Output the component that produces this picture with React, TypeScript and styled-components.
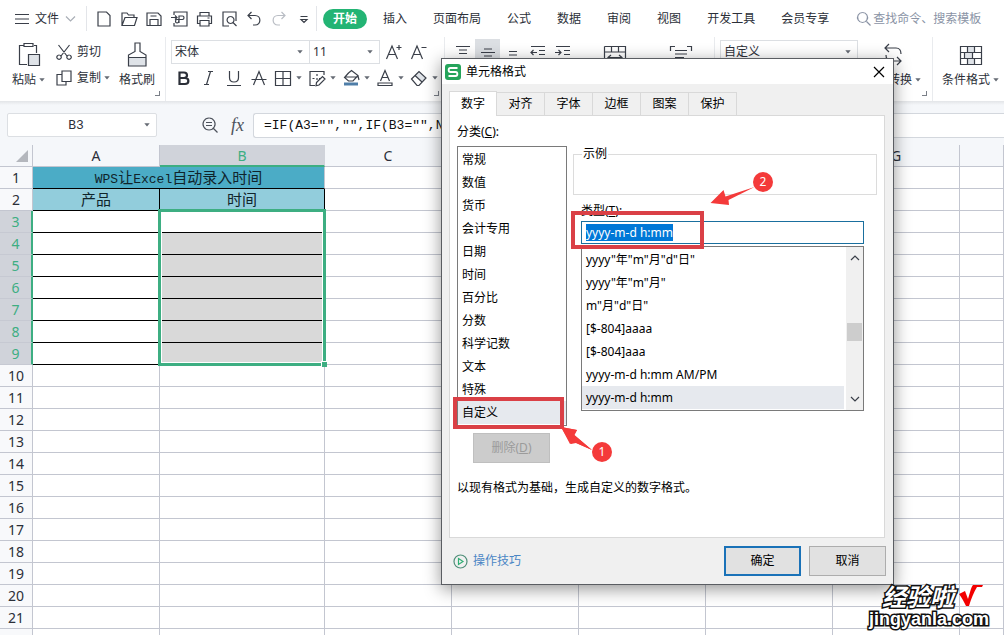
import React, { useEffect, useRef } from "react";
import styled, { createGlobalStyle, css } from "styled-components";

const GlobalStyle = createGlobalStyle`
  *, *::before, *::after { box-sizing: border-box; }
  body { margin: 0; }
  button, input, select { font: inherit; color: inherit; margin: 0; padding: 0; }
  body, button, input, select {
    font-family: "Noto Sans", "Noto Sans CJK SC", sans-serif;
  }
`;

const green = "#3dae82";
const line = "#c3c6d0";
const mono = `"Liberation Mono", "Noto Sans CJK SC", monospace`;

const Page = styled.div`
  position: relative;
  height: 100vh;
  overflow: hidden;
  display: flex;
  flex-direction: column;
  background: #fff;
  color: #2b2f38;
  font-size: 12px;
  line-height: 18px;
  white-space: nowrap;
`;

/* ---------- menu bar ---------- */

const MenuBar = styled.header`
  flex: none;
  display: flex;
  align-items: center;
  height: 37px;
  padding-left: 15px;
`;

const PlainButton = styled.button`
  flex: none;
  display: flex;
  align-items: center;
  justify-content: center;
  border: 0;
  background: transparent;
`;

const FileButton = styled(PlainButton)`
  gap: 6px;
  margin-right: 10px;
`;

const IconButton = styled(PlainButton)<{ $active?: boolean; $wide?: boolean }>`
  width: ${(p) => (p.$wide ? "66px" : "25px")};
  height: 25px;
  background: ${(p) => (p.$active ? "#dcdfe3" : "transparent")};
`;

const Divider = styled.span<{ $space?: number }>`
  flex: none;
  width: 1px;
  align-self: stretch;
  margin: 6px ${(p) => p.$space ?? 4}px 6px 0;
  background: #e3e5e9;
`;

const MenuTabs = styled.nav`
  flex: none;
  display: flex;
  gap: 6px;
`;

const MenuTab = styled.button<{ $active?: boolean }>`
  height: 20px;
  padding: 0 10px;
  border: 0;
  border-radius: 10px;
  background: transparent;
  ${(p) =>
    p.$active &&
    css`
      background: #23b474;
      color: #fff;
      font-weight: 700;
    `}
`;

const Search = styled.label`
  flex: 1;
  min-width: 0;
  display: flex;
  align-items: center;
  gap: 1px;
  margin-left: 17px;
  color: #8a93a5;
`;

const SearchInput = styled.input`
  flex: 1;
  min-width: 0;
  border: 0;
  outline: 0;
  background: transparent;
  &::placeholder { color: #8a93a5; opacity: 1; }
`;

/* ---------- ribbon ---------- */

const Ribbon = styled.div`
  flex: none;
  display: flex;
  height: 64px;
`;

const Group = styled.div<{ $left?: number; $right?: number }>`
  position: relative;
  flex: none;
  display: flex;
  padding: 2px ${(p) => p.$right ?? 5}px 0 ${(p) => p.$left ?? 5}px;
  border-right: 1px solid #e9ebee;
`;

const Corner = styled.span`
  position: absolute;
  right: 5px;
  bottom: 5px;
  width: 5px;
  height: 5px;
  border: solid #7a7f88;
  border-width: 0 1px 1px 0;
`;

const Stack = styled.div`
  display: flex;
  flex-direction: column;
  gap: 1px;
`;

const Line = styled.div`
  display: flex;
  align-items: center;
  height: 25px;
`;

const AlignLine = styled(Line)`
  margin-right: 7px;
`;

const BigButton = styled(PlainButton)`
  flex-direction: column;
  justify-content: flex-start;
  gap: 2px;
  height: 54px;
  padding-top: 2px;
`;

const SmallButton = styled(PlainButton)`
  gap: 5px;
  height: 25px;
  justify-content: flex-start;
`;

const Caption = styled.span`
  display: flex;
  align-items: center;
  gap: 3px;
`;

const DropButton = styled(PlainButton)`
  width: 34px;
  height: 25px;
  gap: 4px;
`;

const SelectFrame = styled.span<{ $w: number; $round?: boolean }>`
  flex: none;
  display: grid;
  grid-template-columns: 1fr 12px;
  align-items: center;
  width: ${(p) => p.$w}px;
  height: 24px;
  margin-right: -1px;
  border: 1px solid #dcdfe3;
  background: #fff;
  border-radius: ${(p) => (p.$round ? "2px" : "0")};
  svg { grid-area: 1 / 2; pointer-events: none; }
`;

const Select = styled.select`
  grid-area: 1 / 1 / 2 / 3;
  appearance: none;
  height: 22px;
  padding-left: 3px;
  border: 0;
  outline: 0;
  background: transparent;
`;

/* ---------- formula bar ---------- */

const FormulaBar = styled.div`
  flex: none;
  display: flex;
  align-items: center;
  height: 44px;
  padding: 4px 0 0 7px;
  background: linear-gradient(#e3e5e8, #f5f7fa 4px);
`;

const NameInput = styled.input`
  grid-area: 1 / 1 / 2 / 3;
  width: 100%;
  height: 22px;
  padding-right: 12px;
  border: 0;
  outline: 0;
  background: transparent;
  font-family: ${mono};
  font-size: 13px;
  text-align: center;
`;

const FormulaTools = styled.div`
  display: flex;
  gap: 2px;
  margin-left: 41px;
`;

const FxButton = styled(PlainButton)`
  width: 27px;
  height: 25px;
  font: italic 18px/20px "Liberation Serif", serif;
  color: #4d525c;
`;

const FormulaInput = styled.input`
  flex: 1;
  min-width: 0;
  height: 25px;
  margin-left: 2px;
  padding-left: 10px;
  border: 1px solid #d3d7dd;
  border-right: 0;
  border-radius: 3px 0 0 3px;
  outline: 0;
  background: #fff;
  color: #111;
  font-family: ${mono};
  font-size: 13px;
`;

/* ---------- sheet ---------- */

const Sheet = styled.table`
  flex: none;
  width: 100%;
  table-layout: fixed;
  border-collapse: separate;
  border-spacing: 0;
  th, td { height: 22px; padding: 0; line-height: 19px; }
`;

const ColHead = styled.th<{ $on?: boolean }>`
  border: solid ${line};
  border-width: 0 1px 1px 0;
  background: #f5f7fa;
  font-size: 14px;
  font-weight: 400;
  ${(p) =>
    p.$on &&
    css`
      background: #d0d3da;
      border-right-color: #d0d3da;
      border-bottom: 2px solid ${green};
      color: ${green};
    `}
`;

const SelectAll = styled(ColHead)`
  svg { display: block; margin-left: auto; margin-right: 4px; }
`;

const RowHead = styled.th<{ $on?: boolean }>`
  border: solid ${line};
  border-width: 0 1px 1px 0;
  background: #f8f9fb;
  font-size: 14px;
  font-weight: 400;
  ${(p) =>
    p.$on &&
    css`
      background: #d0d3da;
      border-bottom-color: #c6c9d2;
      border-right: 2px solid ${green};
      color: ${green};
    `}
`;

type CellKind = "plain" | "title" | "heading" | "boxed" | "active" | "picked";

const cellStyles: Record<CellKind, ReturnType<typeof css> | null> = {
  plain: null,
  title: css`
    background: #4bacc6;
    border-bottom-color: #000;
  `,
  heading: css`
    background: #92cddc;
    border-color: #000;
  `,
  boxed: css`
    border-color: #000;
  `,
  active: css`
    border-color: #000;
  `,
  picked: css`
    background: #d9d9d9;
    border-color: #000;
  `,
};

const Cell = styled.td<{ $kind?: CellKind }>`
  position: relative;
  border: solid ${line};
  border-width: 0 1px 1px 0;
  color: #10242b;
  font-size: 15px;
  text-align: center;
  ${(p) => cellStyles[p.$kind ?? "plain"]}
`;

const Latin = styled.span`
  font-family: ${mono};
  font-size: 13px;
  line-height: 1;
`;

const Selection = styled.div`
  position: absolute;
  z-index: 1;
  top: -2px;
  left: -2px;
  width: calc(100% + 4px);
  height: 157px;
  border: 3px solid ${green};
  box-shadow: inset 0 0 0 1px #fff;
  &::after {
    content: "";
    position: absolute;
    right: -4px;
    bottom: -4px;
    width: 6px;
    height: 6px;
    border: solid #fff;
    border-width: 1px 0 0 1px;
    background: ${green};
  }
`;

/* ---------- dialog ---------- */

const Dialog = styled.section`
  position: absolute;
  z-index: 5;
  left: 441px;
  top: 58px;
  width: 453px;
  border: 1px solid #5a5d62;
  background: #f0f0f0;
  box-shadow: 0 4px 16px rgba(0, 0, 0, 0.42);
  color: #000;
`;

const TitleBar = styled.div`
  display: flex;
  align-items: center;
  gap: 5px;
  height: 25px;
  padding: 0 8px 0 3px;
  background: #fff;
`;

const Title = styled.h1`
  flex: 1;
  margin: 0;
  font-size: 12px;
  font-weight: 400;
`;

const DialogTabs = styled.div`
  display: flex;
  padding: 8px 7px 0;
`;

const DialogTab = styled.button<{ $active?: boolean }>`
  width: 48px;
  height: 23px;
  border: 1px solid #d9d9d9;
  border-width: 1px 1px 0 0;
  background: #f0f0f0;
  ${(p) =>
    p.$active &&
    css`
      position: relative;
      height: 25px;
      margin: -1px 0 -1px;
      padding-bottom: 1px;
      border-width: 1px 1px 0 1px;
      background: #fff;
    `}
`;

const Panel = styled.div`
  margin: 0 8px 0 7px;
  padding: 0 7px 40px;
  border: 1px solid #d9d9d9;
  background: #fff;
`;

const Columns = styled.div`
  display: grid;
  grid-template-columns: 110px 1fr;
  gap: 6px;
`;

const ListLabel = styled.div`
  height: 30px;
  line-height: 32px;
`;

const ListBox = styled.ul`
  margin: 0;
  padding: 1px 0;
  border: 1px solid #7a7a7a;
  background: #fff;
  list-style: none;
`;

const Option = styled.li<{ $on?: boolean }>`
  height: 23px;
  padding-left: 4px;
  line-height: 23px;
  background: ${(p) => (p.$on ? "#e6e9ee" : "transparent")};
`;

const DeleteButton = styled.button`
  display: block;
  width: 77px;
  height: 30px;
  margin: 7px 0 0 16px;
  border: 1px solid #bfbfbf;
  background: #ccc;
  color: #9b9b9b;
`;

const Sample = styled.fieldset`
  height: 49px;
  margin: 30px 0 0;
  padding: 0 8px;
  border: 1px solid #dcdcdc;
  min-width: 0;
`;

const Legend = styled.legend`
  padding: 0 1px;
  line-height: 16px;
`;

const TypeArea = styled.div`
  padding: 0 13px 0 8px;
`;

const TypeLabel = styled.label`
  display: block;
  height: 26px;
  line-height: 32px;
`;

const TypeInput = styled.input`
  display: block;
  width: 100%;
  height: 23px;
  padding-left: 4px;
  border: 1px solid #1a6f9e;
  outline: 0;
  background: #fff;
  &::selection { background: #0078d7; color: #fff; }
`;

const FormatFrame = styled.div`
  display: flex;
  margin-top: 2px;
  border: 1px solid #7a7a7a;
`;

const FormatList = styled(ListBox)`
  flex: 1;
  border: 0;
`;

const ScrollBar = styled.div`
  display: flex;
  flex-direction: column;
  align-items: center;
  justify-content: space-between;
  width: 17px;
  margin-left: 2px;
  padding: 7px 0;
  background: #f0f0f0;
`;

const Thumb = styled.span`
  width: 15px;
  height: 18px;
  margin-top: 6px;
  background: #cdcdcd;
`;

const Hint = styled.p`
  margin: 16px 0 0;
`;

const Footer = styled.div`
  display: flex;
  align-items: center;
  gap: 8px;
  padding: 8px 7px 8px 11px;
`;

const TipLink = styled.a`
  flex: 1;
  display: flex;
  align-items: center;
  gap: 5px;
  color: #4a86c5;
  text-decoration: none;
`;

const ActionButton = styled.button<{ $primary?: boolean }>`
  width: 77px;
  height: 30px;
  border: ${(p) => (p.$primary ? "2px solid #1a72b8" : "1px solid #adadad")};
  background: #e1e1e1;
`;

const Marks = styled.svg`
  position: absolute;
  inset: 0;
  pointer-events: none;
`;

const Watermark = styled.div`
  position: absolute;
  z-index: 6;
  right: 15px;
  bottom: 5px;
  display: flex;
  flex-direction: column;
  align-items: flex-end;
  color: #fff;
  font-weight: 700;
  -webkit-text-stroke: 3px #111;
  paint-order: stroke fill;
`;

const WatermarkName = styled.div`
  display: flex;
  align-items: center;
  gap: 5px;
  margin-right: 6px;
  font: italic 700 24px/24px "Noto Sans CJK SC", sans-serif;
`;

const WatermarkSite = styled.div`
  font: 700 18px/22px "Liberation Sans", sans-serif;
`;

/* ---------- icons ---------- */

const Icon = ({
  d,
  w = 18,
  h = 18,
  fill,
  soft,
  color = "#3a3f49",
}: {
  d: string;
  w?: number;
  h?: number;
  fill?: string;
  soft?: string;
  color?: string;
}) => (
  <svg width={w} height={h} viewBox={`0 0 ${w} ${h}`} fill="none" stroke={color} strokeWidth="1.2" aria-hidden="true">
    {soft && <path d={soft} fill={fill ?? "#dfe3e8"} stroke="none" />}
    <path d={d} />
  </svg>
);

const Arrow = () => (
  <svg width="6" height="4" viewBox="0 0 6 4" aria-hidden="true">
    <path d="M0.3 0.3h5.4L3 3.6z" fill="#666b74" />
  </svg>
);

const quickIcons: { name: string; d: string; color?: string }[] = [
  { name: "新建", d: "M3 2h8.5l3.5 3.5V16H3z" },
  { name: "打开", d: "M2 15.5V3h5l1.5 2H14v2.5M2 15.5L5 7.5h12l-2.500 8z" },
  { name: "保存", d: "M2 3h11l3 3v9.500H2zM5 15V9.500h8V15M5.500 6h6" },
  { name: "输出为PDF", d: "M4 5V2h13v14H4v-3M1 7.500h6M5 5.500l2 2-2 2M9 13V6h3.500c2 0 2 3.500 0 3.500H7c-2 0-2 3.500 0 3.500s2-2 2-3.500" },
  { name: "打印", d: "M5 6V2.500h9V6M4.500 13.500H2.500V6h14v7.500h-2M5 10.500h9v5.500H5zM12.500 8h2" },
  { name: "打印预览", d: "M9 16H3V2h13v9M10.500 6.500a3.500 3.500 0 1 0 .1 0M13 12.500l3.500 3.500" },
  { name: "撤销", d: "M6.500 2L3 5.500 6.500 9M3 5.500h7c6.500 0 6.500 9.500 0 9.500H8" },
  { name: "重做", d: "M11.500 2L15 5.500 11.500 9M15 5.500H8c-6.500 0-6.500 9.500 0 9.500h2", color: "#b9bdc4" },
  { name: "更多", d: "M5.500 6.500h7M6 9.500h6l-3 3z" },
];

const alignIcons = [
  { name: "顶端对齐", d: "M2 3.500h14M5 7h8M5 10.500h8" },
  { name: "垂直居中", d: "M5 6h8M2 9.500h14M5 13h8" },
  { name: "底端对齐", d: "M5 8.500h8M5 12h8M2 15.500h14" },
  { name: "减少缩进", d: "M2 3.500h14M10 7.500h6M10 11.500h6M2 15.500h14M8 9.500H2M4.500 7L2 9.500 4.500 12" },
  { name: "增加缩进", d: "M2 3.500h14M10 7.500h6M10 11.500h6M2 15.500h14M1 9.500h6M4.500 7L7 9.500 4.500 12" },
];

const styleIcons = [
  { name: "倾斜", d: "M8 2.500h5M4 15.500h5M10.500 2.500l-4 13" },
  { name: "下划线", d: "M4.500 2v6.500c0 6 9 6 9 0V2M2 16.500h14" },
  { name: "删除线", d: "M3.500 16L9 2.500 14.500 16M1.500 10.500h15" },
];

const dropIcons = [
  { name: "边框", d: "M1.500 2.500h15v14h-15zM9 2.500v14M1.500 9.500h15" },
  { name: "绘图边框", d: "M16 6V2.500H2v14h5M9 5v2M9 9v2M4.500 9.500h2M11 9.500h1M8.500 13.500l6-6 2.500 2.500-6 6-3 .8z" },
  { name: "填充颜色", d: "M6.500 4L9.500 1.500l6.500 5-5 5.500H6.500L2.500 8.500 6.500 4M2.500 8h13M16 7l1 4", soft: "M2 13.500h14v3H2z", fill: "#4f7ea8" },
  { name: "字体颜色", d: "M4.500 12L9 1.500 13.500 12M6 8.500h6M2 14h14v2.500H2z" },
  { name: "清除", d: "M1.500 10L9 2.500l7 6.500-7 7.500H7zM5 6.500l7 6.500", soft: "M5 6.500L9 2.500l7 6.500-4 4z" },
];

/* ---------- data ---------- */

const menuTabs = ["开始", "插入", "页面布局", "公式", "数据", "审阅", "视图", "开发工具", "会员专享"];
const columns = ["A", "B", "C", "D", "E", "F", "G", "H"];
const dialogTabs = ["数字", "对齐", "字体", "边框", "图案", "保护"];
const categories = ["常规", "数值", "货币", "会计专用", "日期", "时间", "百分比", "分数", "科学记数", "文本", "特殊", "自定义"];
const formats = ['yyyy"年"m"月"d"日"', 'yyyy"年"m"月"', 'm"月"d"日"', "[$-804]aaaa", "[$-804]aaa", "yyyy-m-d h:mm AM/PM", "yyyy-m-d h:mm"];

const Blank = ({ count }: { count: number }) => (
  <>
    {Array.from({ length: count }, (_, i) => (
      <Cell key={i} />
    ))}
  </>
);

const SheetRow = ({ n }: { n: number }) => {
  const on = n >= 3 && n <= 9;
  return (
    <tr>
      <RowHead $on={on}>{n}</RowHead>
      {n === 1 && (
        <Cell $kind="title" colSpan={2}>
          <Latin>WPS</Latin>让<Latin>Excel</Latin>自动录入时间
        </Cell>
      )}
      {n === 2 && (
        <>
          <Cell $kind="heading">产品</Cell>
          <Cell $kind="heading">时间</Cell>
        </>
      )}
      {on && (
        <>
          <Cell $kind="boxed" />
          <Cell $kind={n === 3 ? "active" : "picked"}>{n === 3 && <Selection />}</Cell>
        </>
      )}
      <Blank count={n > 9 ? 8 : 6} />
    </tr>
  );
};

const FormatDialog = () => {
  const typeRef = useRef<HTMLInputElement>(null);
  useEffect(() => {
    typeRef.current?.focus({ preventScroll: true });
    typeRef.current?.select();
  }, []);
  return (
    <Dialog role="dialog" aria-labelledby="dialog-title">
      <TitleBar>
        <svg width="16" height="16" viewBox="0 0 16 16" aria-hidden="true">
          <rect width="16" height="16" rx="3" fill="#25a45b" />
          <path d="M12.500 4H5.500C3 4 3 8 5.500 8h5c2.500 0 2.500 4 0 4h-7" fill="none" stroke="#fff" strokeWidth="1.800" />
        </svg>
        <Title id="dialog-title">单元格格式</Title>
        <PlainButton aria-label="关闭">
          <Icon w={12} h={12} d="M1 1l10 10M11 1L1 11" color="#000" />
        </PlainButton>
      </TitleBar>
      <DialogTabs role="tablist">
        {dialogTabs.map((t, i) => (
          <DialogTab key={t} role="tab" aria-selected={i === 0} $active={i === 0}>
            {t}
          </DialogTab>
        ))}
      </DialogTabs>
      <Panel>
        <Columns>
          <div>
            <ListLabel id="category-label">
              分类(<u>C</u>):
            </ListLabel>
            <ListBox role="listbox" aria-labelledby="category-label">
              {categories.map((c) => (
                <Option key={c} role="option" aria-selected={c === "自定义"} $on={c === "自定义"}>
                  {c}
                </Option>
              ))}
            </ListBox>
            <DeleteButton disabled>
              删除(<u>D</u>)
            </DeleteButton>
          </div>
          <div>
            <Sample>
              <Legend>示例</Legend>
            </Sample>
            <TypeArea>
              <TypeLabel htmlFor="type">
                类型(<u>T</u>):
              </TypeLabel>
              <TypeInput id="type" ref={typeRef} defaultValue="yyyy-m-d h:mm" />
              <FormatFrame>
                <FormatList role="listbox" aria-label="类型">
                  {formats.map((f, i) => (
                    <Option key={f} role="option" aria-selected={i === 6} $on={i === 6}>
                      {f}
                    </Option>
                  ))}
                </FormatList>
                <ScrollBar>
                  <Icon w={10} h={7} d="M1 6l4-4 4 4" />
                  <Thumb />
                  <Icon w={10} h={7} d="M1 1l4 4 4-4" />
                </ScrollBar>
              </FormatFrame>
            </TypeArea>
          </div>
        </Columns>
        <Hint>以现有格式为基础，生成自定义的数字格式。</Hint>
      </Panel>
      <Footer>
        <TipLink href="#tips">
          <svg width="15" height="15" viewBox="0 0 15 15" fill="none" aria-hidden="true">
            <circle cx="7.500" cy="7.500" r="6.500" stroke="#4f8f79" strokeWidth="1.200" />
            <path d="M5.500 4.500L10 7.500l-4.500 3z" stroke="#2fae73" strokeWidth="1.200" />
          </svg>
          操作技巧
        </TipLink>
        <ActionButton $primary>确定</ActionButton>
        <ActionButton>取消</ActionButton>
      </Footer>
      <Marks width="451" height="525" viewBox="442 59 451 525" aria-hidden="true">
        <g fill="none" stroke="#da4046" strokeWidth="4">
          <rect x="455" y="399" width="107" height="28" />
          <rect x="573" y="213" width="129" height="34" />
        </g>
        <g fill="#f43a3a">
          <path d="M561 427l16 3-3 5 18 15-16-7-5 1z" />
          <path d="M561 427l16 3-2.500 5 17.500 15-18-8-4 2z" />
          <path d="M710.500 203l13-13 2 6.500 29-9.500-26 13 .5 5z" />
          <circle cx="602" cy="452" r="10" />
          <circle cx="763" cy="182" r="10" />
        </g>
        <g fill="#fff" fontSize="12" textAnchor="middle">
          <text x="602" y="456">1</text>
          <text x="763" y="186">2</text>
        </g>
      </Marks>
    </Dialog>
  );
};

export default function App() {
  return (
    <Page>
      <GlobalStyle />
      <MenuBar>
        <FileButton>
          <Icon w={14} h={12} d="M0 1.500h14M0 6h14M0 10.500h14" />
          文件
          <Icon w={11} h={6} d="M1 .5l4.500 4.500L10 .5" color="#a9aeb6" />
        </FileButton>
        <Divider />
        {quickIcons.map((q) => (
          <IconButton key={q.name} aria-label={q.name}>
            <Icon d={q.d} color={q.color} />
          </IconButton>
        ))}
        <Divider $space={6} />
        <MenuTabs>
          {menuTabs.map((t, i) => (
            <MenuTab key={t} $active={i === 0}>
              {t}
            </MenuTab>
          ))}
        </MenuTabs>
        <Search>
          <Icon w={16} h={16} d="M6.500 1.500a5 5 0 1 0 .1 0M10.500 10.500l4 4" color="#8a93a5" />
          <SearchInput aria-label="搜索" placeholder="查找命令、搜索模板" />
        </Search>
      </MenuBar>

      <Ribbon>
        <Group $left={12} $right={10}>
          <BigButton>
            <Icon w={24} h={28} d="M7 4.500H2.500v19H10M17 4.500h2.500V12M7 2.500h9v3H7zM11.500 13.500h11v11h-11z" soft="M11.500 13.500h11v11h-11z" />
            <Caption>
              粘贴
              <Arrow />
            </Caption>
          </BigButton>
          <ClipColumn>
            <SmallButton>
              <Icon w={16} h={16} d="M2.500 1l8.500 11M13.500 1L5 12M3 11a2.200 2.200 0 1 0 .1 0M13 11a2.200 2.200 0 1 0 .1 0" />
              剪切
            </SmallButton>
            <SmallButton>
              <Icon w={16} h={16} d="M6 1h9v10.500H6zM6 4.500H1V15h9v-3.500" />
              <Caption>
                复制
                <Arrow />
              </Caption>
            </SmallButton>
          </ClipColumn>
          <BigButton>
            <Icon w={36} h={28} d="M16 2h5v8.500l6 3.500v11H9.500V14l6.500-3.500zM9.500 16.500H27" soft="M9.500 16.500H27V25H9.500z" />
            格式刷
          </BigButton>
          <Corner />
        </Group>

        <Group $right={3}>
          <Stack>
            <Line>
              <SelectFrame $w={139}>
                <Select aria-label="字体">
                  <option>宋体</option>
                </Select>
                <Arrow />
              </SelectFrame>
              <SelectFrame $w={71}>
                <Select aria-label="字号">
                  <option>11</option>
                </Select>
                <Arrow />
              </SelectFrame>
              <IconButton aria-label="增大字号">
                <Icon w={20} d="M4.500 16L10 3l5.500 13M6.500 11.500h7M14.500 4.500h5M17 2v5" />
              </IconButton>
              <IconButton aria-label="减小字号">
                <Icon w={20} d="M4.500 16L10 3l5.500 13M6.500 11.500h7M14.500 4.500h5" />
              </IconButton>
            </Line>
            <Line>
              <IconButton aria-label="加粗">
                <svg width="18" height="18" viewBox="0 0 18 18" fill="none" stroke="#2b2f38" strokeWidth="2.2" aria-hidden="true">
                  <path d="M4.500 3.500H9c4 0 4 5.500 0 5.500H4.500zM4.500 9H10c4.500 0 4.500 6 0 6H4.500z" />
                </svg>
              </IconButton>
              {styleIcons.map((s) => (
                <IconButton key={s.name} aria-label={s.name}>
                  <Icon d={s.d} />
                </IconButton>
              ))}
              {dropIcons.map((s) => (
                <DropButton key={s.name} aria-label={s.name}>
                  <Icon d={s.d} soft={s.soft} fill={s.fill} />
                  <Arrow />
                </DropButton>
              ))}
            </Line>
          </Stack>
          <Corner />
        </Group>

        <Group $right={0}>
          <AlignLine>
            {alignIcons.map((a, i) => (
              <IconButton key={a.name} aria-label={a.name} $active={i === 1}>
                <Icon d={a.d} />
              </IconButton>
            ))}
          </AlignLine>
          <Line>
            <IconButton $wide aria-label="合并居中">
              <Icon w={24} h={18} d="M1.500 3.500h21V19M1.500 3.500V19M1.500 9h21M8.500 3.500V9M15.500 3.500V9M5 14.500h14M8 12l-3 2.500L8 17M16 12l3 2.500-3 2.500" />
            </IconButton>
            <IconButton $wide aria-label="自动换行">
              <Icon w={24} h={18} d="M1.500 8V3.500H6M18 3.500h4.500V8M6 7.500h12M6 11h12M6 14.500h9" />
            </IconButton>
          </Line>
        </Group>

        <Group $right={11}>
          <AlignLine>
            <SelectFrame $w={138}>
              <Select aria-label="数字格式">
                <option>自定义</option>
              </Select>
              <Arrow />
            </SelectFrame>
          </AlignLine>
          <BigButton>
            <Icon w={56} h={28} d="M24 3l-4 4 4 4M20 7h11c4 0 5 2 5 6M32 16l4 4-4 4M36 20H26c-4 0-5-2-5-6" />
            <Caption>
              类型转换
              <Arrow />
            </Caption>
          </BigButton>
          <Corner />
        </Group>

        <Group $left={9}>
          <BigButton>
            <Icon w={24} h={28} d="M1.500 5.500h21v18h-21zM1.500 11.500h21M1.500 17.500h21M8.500 5.500v6M15.500 5.500v6M5.500 11.500v6M13.500 11.500v6M8.500 17.500v6M15.500 17.500v6" soft="M8.500 5.500h7v6h-7zM8.500 17.500h7v6h-7zM5.500 11.500h8v6h-8z" />
            <Caption>
              条件格式
              <Arrow />
            </Caption>
          </BigButton>
        </Group>
      </Ribbon>

      <FormulaBar>
        <SelectFrame $w={150} $round>
          <NameInput aria-label="名称框" defaultValue="B3" />
          <Arrow />
        </SelectFrame>
        <FormulaTools>
          <IconButton aria-label="查找">
            <Icon d="M8 2a6 6 0 1 0 .1 0M12.500 12.500l4 4M5 6.500h6M5 9.500h6" color="#4d525c" />
          </IconButton>
          <FxButton aria-label="插入函数">fx</FxButton>
        </FormulaTools>
        <FormulaInput aria-label="编辑栏" defaultValue={'=IF(A3="","",IF(B3="",NOW(),B3))'} />
      </FormulaBar>

      <Sheet>
        <colgroup>
          <col width="33" />
          <col width="127" />
          <col width="165" />
          <col width="127" />
          <col width="127" />
          <col width="127" />
          <col width="127" />
          <col width="127" />
          <col />
        </colgroup>
        <thead>
          <tr>
            <SelectAll aria-label="全选">
              <svg width="12" height="12" viewBox="0 0 12 12" aria-hidden="true">
                <path d="M12 0v12H0z" fill="#b4b7bd" />
              </svg>
            </SelectAll>
            {columns.map((c) => (
              <ColHead key={c} $on={c === "B"}>
                {c === "H" ? "" : c}
              </ColHead>
            ))}
          </tr>
        </thead>
        <tbody>
          {Array.from({ length: 22 }, (_, i) => (
            <SheetRow key={i} n={i + 1} />
          ))}
        </tbody>
      </Sheet>

      <FormatDialog />

      <Watermark>
        <WatermarkName>
          经验啦
          <svg width="24" height="24" viewBox="0 0 24 24" aria-hidden="true">
            <path d="M0 10l6-3 3 8C11 9 12 3 14 1h10l-1 2h-5C15 8 12 15 10 22H7C5 18 3 14 0 10z" fill="#f20000" />
          </svg>
        </WatermarkName>
        <WatermarkSite>jingyanla.com</WatermarkSite>
      </Watermark>
    </Page>
  );
}

const ClipColumn = styled(Stack)`
  margin: 0 9px 0 11px;
`;
